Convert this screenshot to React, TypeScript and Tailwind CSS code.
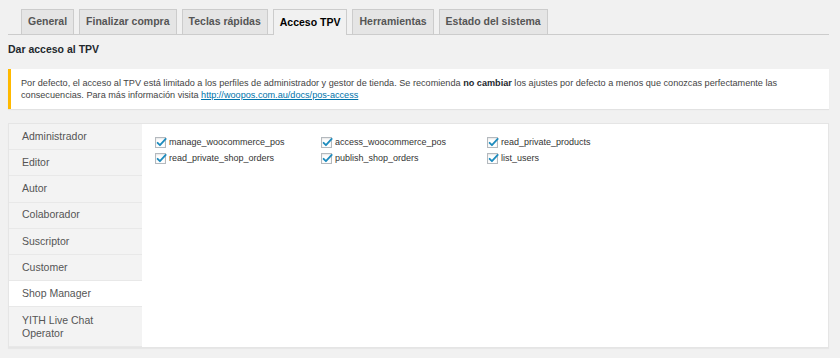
import React from "react";

const tabs = ["General", "Finalizar compra", "Teclas rápidas", "Acceso TPV", "Herramientas", "Estado del sistema"];
const roles = ["Administrador", "Editor", "Autor", "Colaborador", "Suscriptor", "Customer", "Shop Manager"];
const caps = [
  "manage_woocommerce_pos",
  "access_woocommerce_pos",
  "read_private_products",
  "read_private_shop_orders",
  "publish_shop_orders",
  "list_users",
];

function Check() {
  return (
    <span className="relative inline-flex h-[11px] w-[11px] shrink-0 items-center justify-center border border-[#b4b9be] bg-white shadow-[inset_0_1px_2px_rgba(0,0,0,0.1)]">
      <svg viewBox="0 0 20 20" className="absolute left-[-1px] top-[-2px] h-[13px] w-[13px]">
        <path d="M4 10.5l3.6 3.6L16.5 4.5" fill="none" stroke="#1e8cbe" strokeWidth="2.8" strokeLinecap="round" strokeLinejoin="round" />
      </svg>
    </span>
  );
}

export default function App() {
  return (
    <div
      className="h-[358px] w-[840px] overflow-hidden bg-[#f1f1f1] pl-[8px] pr-[11px] text-[#444]"
      style={{ fontFamily: '"Liberation Sans", Arial, sans-serif' }}
    >
      <div className="flex items-end gap-[5px] border-b border-[#cccccc] pl-[13px] pt-[9px]">
        {tabs.map((t) => {
          const active = t === "Acceso TPV";
          return (
            <div
              key={t}
              className={
                active
                  ? "-mb-px flex h-[26px] items-center border border-b-0 border-[#cccccc] bg-[#f1f1f1] px-[6px] text-[10.5px] font-bold text-[#000000]"
                  : "flex h-[25px] items-center border border-b-0 border-[#cccccc] bg-[#e5e5e5] px-[6px] text-[10.5px] font-bold text-[#555555]"
              }
            >
              {t}
            </div>
          );
        })}
      </div>

      <h2 className="mt-[7px] text-[10.5px] font-bold leading-[14px] text-[#23282d]">Dar acceso al TPV</h2>

      <div className="mt-[13px] border-l-[3px] border-[#ffb900] bg-white py-[8px] pl-[10px] pr-[12px] text-[9.15px] leading-[12px] text-[#444] shadow-[0_1px_1px_rgba(0,0,0,0.06)]">
        Por defecto, el acceso al TPV está limitado a los perfiles de administrador y gestor de tienda. Se recomienda{" "}
        <strong className="font-bold text-[#23282d]">no cambiar</strong> los ajustes por defecto a menos que conozcas perfectamente las
        consecuencias. Para más información visita{" "}
        <span className="text-[#0073aa] underline">http://woopos.com.au/docs/pos-access</span>
      </div>

      <div className="mt-[14px] flex h-[225px] border border-[#e5e5e5] bg-white shadow-[0_1px_1px_rgba(0,0,0,0.04)]">
        <div className="flex w-[133px] flex-col bg-[#f3f3f3]">
          {roles.map((r) => (
            <div
              key={r}
              className={
                r === "Shop Manager"
                  ? "flex h-[26.5px] items-center border-b border-[#e8e8e8] bg-white pl-[13px] text-[10.5px] text-[#555]"
                  : "flex h-[26.5px] items-center border-b border-[#e8e8e8] pl-[13px] text-[10.5px] text-[#555]"
              }
            >
              {r}
            </div>
          ))}
          <div className="flex h-[40px] items-center border-b border-[#e8e8e8] pl-[13px] text-[10.5px] leading-[13px] text-[#555]">
            YITH Live Chat
            <br />
            Operator
          </div>
        </div>
        <div className="flex-1 pl-[13px] pt-[13px]">
          <div className="grid grid-cols-[166px_166px_166px] gap-y-[5px]">
            {caps.map((c) => (
              <div key={c} className="flex h-[11px] items-center gap-[3px] text-[9px] text-[#333]">
                <Check />
                <span className="leading-[11px]">{c}</span>
              </div>
            ))}
          </div>
        </div>
      </div>
    </div>
  );
}
